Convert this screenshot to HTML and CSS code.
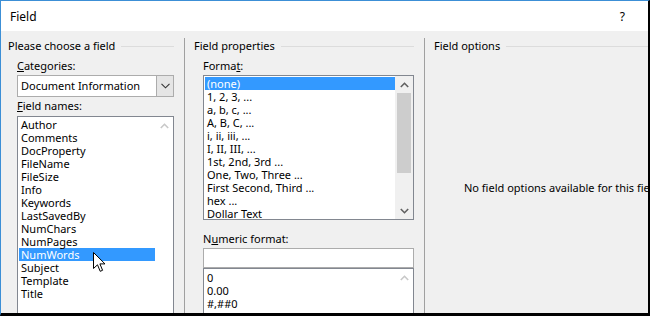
FILE: index.html
```html
<!DOCTYPE html>
<html lang="en">
<head>
    <meta charset="UTF-8">
    <title>Field</title>
    <link rel="stylesheet" href="styles.css">
</head>
<body>
    <div class="dialog">
        <div class="titlebar">
            <span class="title">Field</span>
            <span class="help">?</span>
        </div>
        <div class="main">
            <div class="col col-choose">
                <div class="group-head"><span>Please choose a field</span></div>
                <div class="label"><u>C</u>ategories:</div>
                <div class="combo">
                    <div class="combo-value">Document Information</div>
                    <div class="combo-btn">
                        <svg width="9" height="6" viewBox="0 0 9 6"><polyline points="0.5,0.8 4.5,4.8 8.5,0.8" fill="none" stroke="#333" stroke-width="1.1"/></svg>
                    </div>
                </div>
                <div class="label names-label"><u>F</u>ield names:</div>
                <div class="listbox names">
                    <div class="items">
                        <div class="item">Author</div>
                        <div class="item">Comments</div>
                        <div class="item">DocProperty</div>
                        <div class="item">FileName</div>
                        <div class="item">FileSize</div>
                        <div class="item">Info</div>
                        <div class="item">Keywords</div>
                        <div class="item">LastSavedBy</div>
                        <div class="item">NumChars</div>
                        <div class="item">NumPages</div>
                        <div class="item selected">NumWords</div>
                        <div class="item">Subject</div>
                        <div class="item">Template</div>
                        <div class="item">Title</div>
                    </div>
                    <div class="scrollbar disabled">
                        <div class="arrow">
                            <svg width="9" height="6" viewBox="0 0 9 6"><polyline points="0.8,5 4.5,1.3 8.2,5" fill="none" stroke="#c8c8c8" stroke-width="1.6"/></svg>
                        </div>
                    </div>
                </div>
            </div>

            <div class="col col-props">
                <div class="group-head"><span>Field properties</span></div>
                <div class="label">Forma<u>t</u>:</div>
                <div class="listbox formats">
                    <div class="items">
                        <div class="item selected">(none)</div>
                        <div class="item">1, 2, 3, ...</div>
                        <div class="item">a, b, c, ...</div>
                        <div class="item">A, B, C, ...</div>
                        <div class="item">i, ii, iii, ...</div>
                        <div class="item">I, II, III, ...</div>
                        <div class="item">1st, 2nd, 3rd ...</div>
                        <div class="item">One, Two, Three ...</div>
                        <div class="item">First Second, Third ...</div>
                        <div class="item">hex ...</div>
                        <div class="item">Dollar Text</div>
                    </div>
                    <div class="scrollbar">
                        <div class="arrow">
                            <svg width="9" height="6" viewBox="0 0 9 6"><polyline points="0.8,5 4.5,1.3 8.2,5" fill="none" stroke="#606060" stroke-width="1.6"/></svg>
                        </div>
                        <div class="thumb"></div>
                        <div class="track"></div>
                        <div class="arrow">
                            <svg width="9" height="6" viewBox="0 0 9 6"><polyline points="0.8,1 4.5,4.7 8.2,1" fill="none" stroke="#606060" stroke-width="1.6"/></svg>
                        </div>
                    </div>
                </div>
                <div class="label numeric-label">N<u>u</u>meric format:</div>
                <div class="textbox"></div>
                <div class="listbox numbers">
                    <div class="items">
                        <div class="item">0</div>
                        <div class="item">0.00</div>
                        <div class="item">#,##0</div>
                        <div class="item">#,##0.00</div>
                    </div>
                    <div class="scrollbar disabled">
                        <div class="arrow">
                            <svg width="9" height="6" viewBox="0 0 9 6"><polyline points="0.8,5 4.5,1.3 8.2,5" fill="none" stroke="#c8c8c8" stroke-width="1.6"/></svg>
                        </div>
                    </div>
                </div>
            </div>

            <div class="col col-options">
                <div class="group-head"><span>Field options</span></div>
                <div class="empty-note">No field options available for this field</div>
            </div>
        </div>

        <svg class="cursor" width="13" height="21" viewBox="0 0 13 21">
            <path d="M0.5,0.5 L0.5,16.5 L4.5,12.8 L7.2,19.3 L9.6,18.3 L6.9,11.9 L12,11.9 Z" fill="#fff" stroke="#000" stroke-width="1"/>
        </svg>
    </div>
</body>
</html>
```

FILE: styles.css
```css
* {
    box-sizing: border-box;
}

body {
    margin: 0;
    font-family: "Noto Sans", "Open Sans", Arial, sans-serif;
    font-size: 11px;
    color: #000;
    background: #000;
}

.dialog {
    position: relative;
    width: 650px;
    height: 316px;
    overflow: hidden;
    background-color: #f0f0f0;
    border-top: 1px solid #3c8fd6;
    border-left: 1px solid #3c8fd6;
    border-right: 2px solid #000;
    border-bottom: 3px solid #000;
}

.titlebar {
    display: flex;
    justify-content: space-between;
    align-items: center;
    height: 30px;
    background-color: #fff;
    padding: 0 23px 0 9px;
    font-size: 12px;
}

.main {
    display: flex;
    height: 282px;
    padding-top: 7px;
}

.col {
    display: flex;
    flex-direction: column;
    flex-shrink: 0;
}

.col-choose {
    width: 184px;
    padding: 0 10px 0 7px;
    border-right: 1px solid #a0a0a0;
}

.col-props {
    width: 240px;
    padding: 0 10px 0 9px;
    border-right: 1px solid #a0a0a0;
}

.col-options {
    flex: 1;
    min-width: 0;
    overflow: hidden;
    padding-left: 9px;
}

.group-head {
    display: flex;
    align-items: center;
    height: 16px;
    line-height: 16px;
    white-space: nowrap;
}

.group-head::after {
    content: "";
    flex: 1;
    height: 1px;
    margin-left: 6px;
    background-color: #dcdcdc;
}

.label {
    height: 16px;
    line-height: 16px;
    margin-top: 4px;
    padding-left: 9px;
    white-space: nowrap;
}

.names-label {
    margin-top: 1px;
}

.combo {
    display: flex;
    height: 22px;
    flex-shrink: 0;
    margin: 1px 0 0 9px;
    border: 1px solid #acacac;
    background-color: #fff;
}

.combo-value {
    flex: 1;
    line-height: 20px;
    padding-left: 3px;
    white-space: nowrap;
}

.combo-btn {
    display: flex;
    align-items: center;
    justify-content: center;
    width: 17px;
    background-color: #e5e5e5;
    border-left: 1px solid #acacac;
}

.listbox {
    display: flex;
    margin-left: 9px;
    border: 1px solid #828790;
    background-color: #fff;
    overflow: hidden;
}

.names {
    flex: 1;
    margin-top: 2px;
    border-bottom: none;
}

.formats {
    height: 145px;
    flex-shrink: 0;
    margin-top: 1px;
}

.numbers {
    flex: 1;
    border-bottom: none;
}

.items {
    flex: 1;
    padding: 1px 0 0 1px;
    overflow: hidden;
}

.numbers .items {
    padding-top: 2px;
}

.item {
    height: 13px;
    line-height: 13px;
    padding-left: 2px;
    white-space: nowrap;
}

.item.selected {
    background-color: #3399ff;
    color: #fff;
}

.scrollbar {
    display: flex;
    flex-direction: column;
    width: 18px;
    background-color: #f0f0f0;
}

.scrollbar.disabled {
    background-color: #fff;
}

.arrow {
    display: flex;
    align-items: center;
    justify-content: center;
    height: 17px;
}

.thumb {
    height: 80px;
    margin: 0 2px;
    background-color: #cdcdcd;
}

.track {
    flex: 1;
}

.numeric-label {
    margin-top: 11px;
}

.textbox {
    height: 20px;
    flex-shrink: 0;
    margin: 1px 0 0 9px;
    border: 1px solid #acacac;
    background-color: #fff;
}

.empty-note {
    margin-top: 126px;
    padding-left: 30px;
    white-space: nowrap;
}

.cursor {
    position: absolute;
    left: 92px;
    top: 251px;
}
```
